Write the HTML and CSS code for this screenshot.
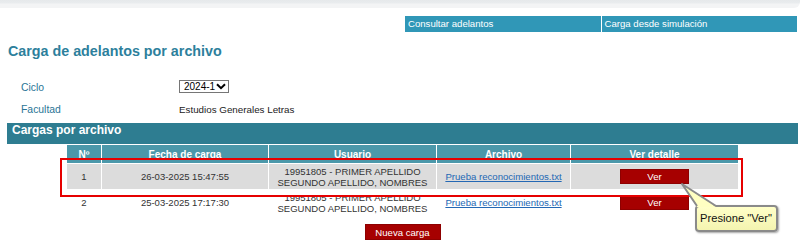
FILE: index.html
```html
<!DOCTYPE html>
<html lang="es">
    <head>
        <meta charset="UTF-8">
        <title>Carga de adelantos por archivo</title>
        <link rel="stylesheet" href="styles.css">
    </head>
    <body>
        <div class="top-strip"></div>
        <div class="nav">
            <a class="nav-item" href="#">Consultar adelantos</a>
            <a class="nav-item" href="#">Carga desde simulación</a>
        </div>
        <h2 class="title">Carga de adelantos por archivo</h2>
        <div class="form">
            <span class="label">Ciclo</span>
            <span class="value">
                <span class="select">2024-1
                    <svg width="10" height="7" viewBox="0 0 10 7"><path d="M1 1.2 L5 5.2 L9 1.2" fill="none" stroke="#000" stroke-width="2"/></svg>
                </span>
            </span>
            <span class="label">Facultad</span>
            <span class="value">Estudios Generales Letras</span>
        </div>
        <div class="section">Cargas por archivo</div>
        <div class="grid-wrap">
            <table class="grid">
                <thead>
                    <tr>
                        <th class="c-num">Nº</th>
                        <th class="c-date">Fecha de carga</th>
                        <th class="c-user">Usuario</th>
                        <th class="c-file">Archivo</th>
                        <th class="c-view">Ver detalle</th>
                    </tr>
                </thead>
                <tbody>
                    <tr class="alt">
                        <td>1</td>
                        <td>26-03-2025 15:47:55</td>
                        <td>19951805 - PRIMER APELLIDO<br>SEGUNDO APELLIDO, NOMBRES</td>
                        <td><a href="#">Prueba reconocimientos.txt</a></td>
                        <td><button class="btn btn-ver">Ver</button></td>
                    </tr>
                    <tr>
                        <td>2</td>
                        <td>25-03-2025 17:17:30</td>
                        <td>19951805 - PRIMER APELLIDO<br>SEGUNDO APELLIDO, NOMBRES</td>
                        <td><a href="#">Prueba reconocimientos.txt</a></td>
                        <td><button class="btn btn-ver">Ver</button></td>
                    </tr>
                </tbody>
            </table>
            <div class="highlight"></div>
            <svg class="tip-arrow" width="45" height="30" viewBox="0 0 45 30">
                <polygon points="6,4 21,27 40,27" fill="#ffffc2"/>
                <polyline points="21,26 6,4 40,26" fill="none" stroke="#8a8a8a" stroke-width="2" stroke-linejoin="round"/>
            </svg>
            <div class="tooltip">Presione "Ver"</div>
        </div>
        <div class="actions">
            <button class="btn btn-new">Nueva carga</button>
        </div>
    </body>
</html>
```

FILE: styles.css
```css
* {
    box-sizing: border-box;
}

body {
    margin: 0;
    font-family: "Liberation Sans", Arial, sans-serif;
    background: #fff;
    color: #222;
}

.top-strip {
    width: 800px;
    height: 8px;
    background: linear-gradient(#e6e9eb 0, #e9ecee 3px, #f3f4f5 4px, #f3f4f5 100%);
    border-bottom-right-radius: 6px;
}

.nav {
    display: flex;
    gap: 1px;
    margin: 8px 0 0 405px;
    width: 392px;
}

.nav-item {
    flex: 1;
    height: 16px;
    line-height: 16px;
    padding-left: 3px;
    background: #3097b7;
    color: #fff;
    font-size: 9.6px;
    text-decoration: none;
}

.title {
    margin: 11px 0 0 8px;
    height: 17px;
    line-height: 17px;
    font-size: 14.3px;
    font-weight: bold;
    color: #2d7f9c;
}

.form {
    display: grid;
    grid-template-columns: 158px auto;
    grid-auto-rows: 22px;
    align-items: center;
    margin: 16px 0 0 21px;
}

.label {
    font-size: 10.4px;
    color: #2a7596;
}

.value {
    font-size: 9.8px;
    color: #222;
}

.select {
    display: inline-flex;
    align-items: center;
    justify-content: space-between;
    width: 50px;
    height: 13px;
    margin-top: -3px;
    padding: 0 2px 0 4px;
    border: 1px solid #767676;
    font-size: 10px;
    color: #000;
}

.section {
    margin: 3px 7px 0 7px;
    height: 21px;
    line-height: 15px;
    padding-left: 5px;
    background: #2e7d91;
    color: #fff;
    font-size: 12px;
    font-weight: bold;
}

.grid-wrap {
    position: relative;
    width: 673px;
    margin: 0 auto;
}

.grid {
    border-collapse: separate;
    border-spacing: 1px;
    width: 673px;
    font-size: 9.5px;
    color: #333;
}

.grid th {
    height: 18px;
    padding: 0;
    background: #4b98aa;
    color: #fff;
    font-size: 10px;
    font-weight: bold;
}

.grid td {
    height: 25px;
    padding: 0;
    text-align: center;
    line-height: 11px;
}

.grid .alt td {
    background: #dcdcdc;
}

.c-num { width: 34px; }
.c-date { width: 166px; }
.c-user { width: 167px; }
.c-file { width: 133px; }
.c-view { width: 167px; }

.grid a {
    color: #2468b4;
    font-size: 9.6px;
}

.btn {
    border: 1px solid #8e0000;
    background: #a60000;
    color: #fff;
    font-family: inherit;
    font-size: 9.6px;
    padding: 0;
    cursor: pointer;
}

.btn-ver {
    display: block;
    width: 69px;
    height: 15px;
    margin: 0 auto;
}

.highlight {
    position: absolute;
    left: -6px;
    top: 14px;
    width: 683px;
    height: 39px;
    border: 2px solid #e60000;
}

.tooltip {
    position: absolute;
    left: 629px;
    top: 61px;
    width: 83px;
    height: 27px;
    padding-left: 3px;
    line-height: 23px;
    border: 2px solid #8a8a8a;
    border-radius: 4px;
    background: linear-gradient(#ffffc8, #f4f4b0);
    box-shadow: 1px 1px 2px rgba(0, 0, 0, .35);
    color: #111;
    font-size: 11.2px;
}

.tip-arrow {
    position: absolute;
    left: 610px;
    top: 36px;
    z-index: 1;
}

.actions {
    display: flex;
    justify-content: center;
    margin-top: 8px;
}

.btn-new {
    width: 76px;
    height: 16px;
}
```
